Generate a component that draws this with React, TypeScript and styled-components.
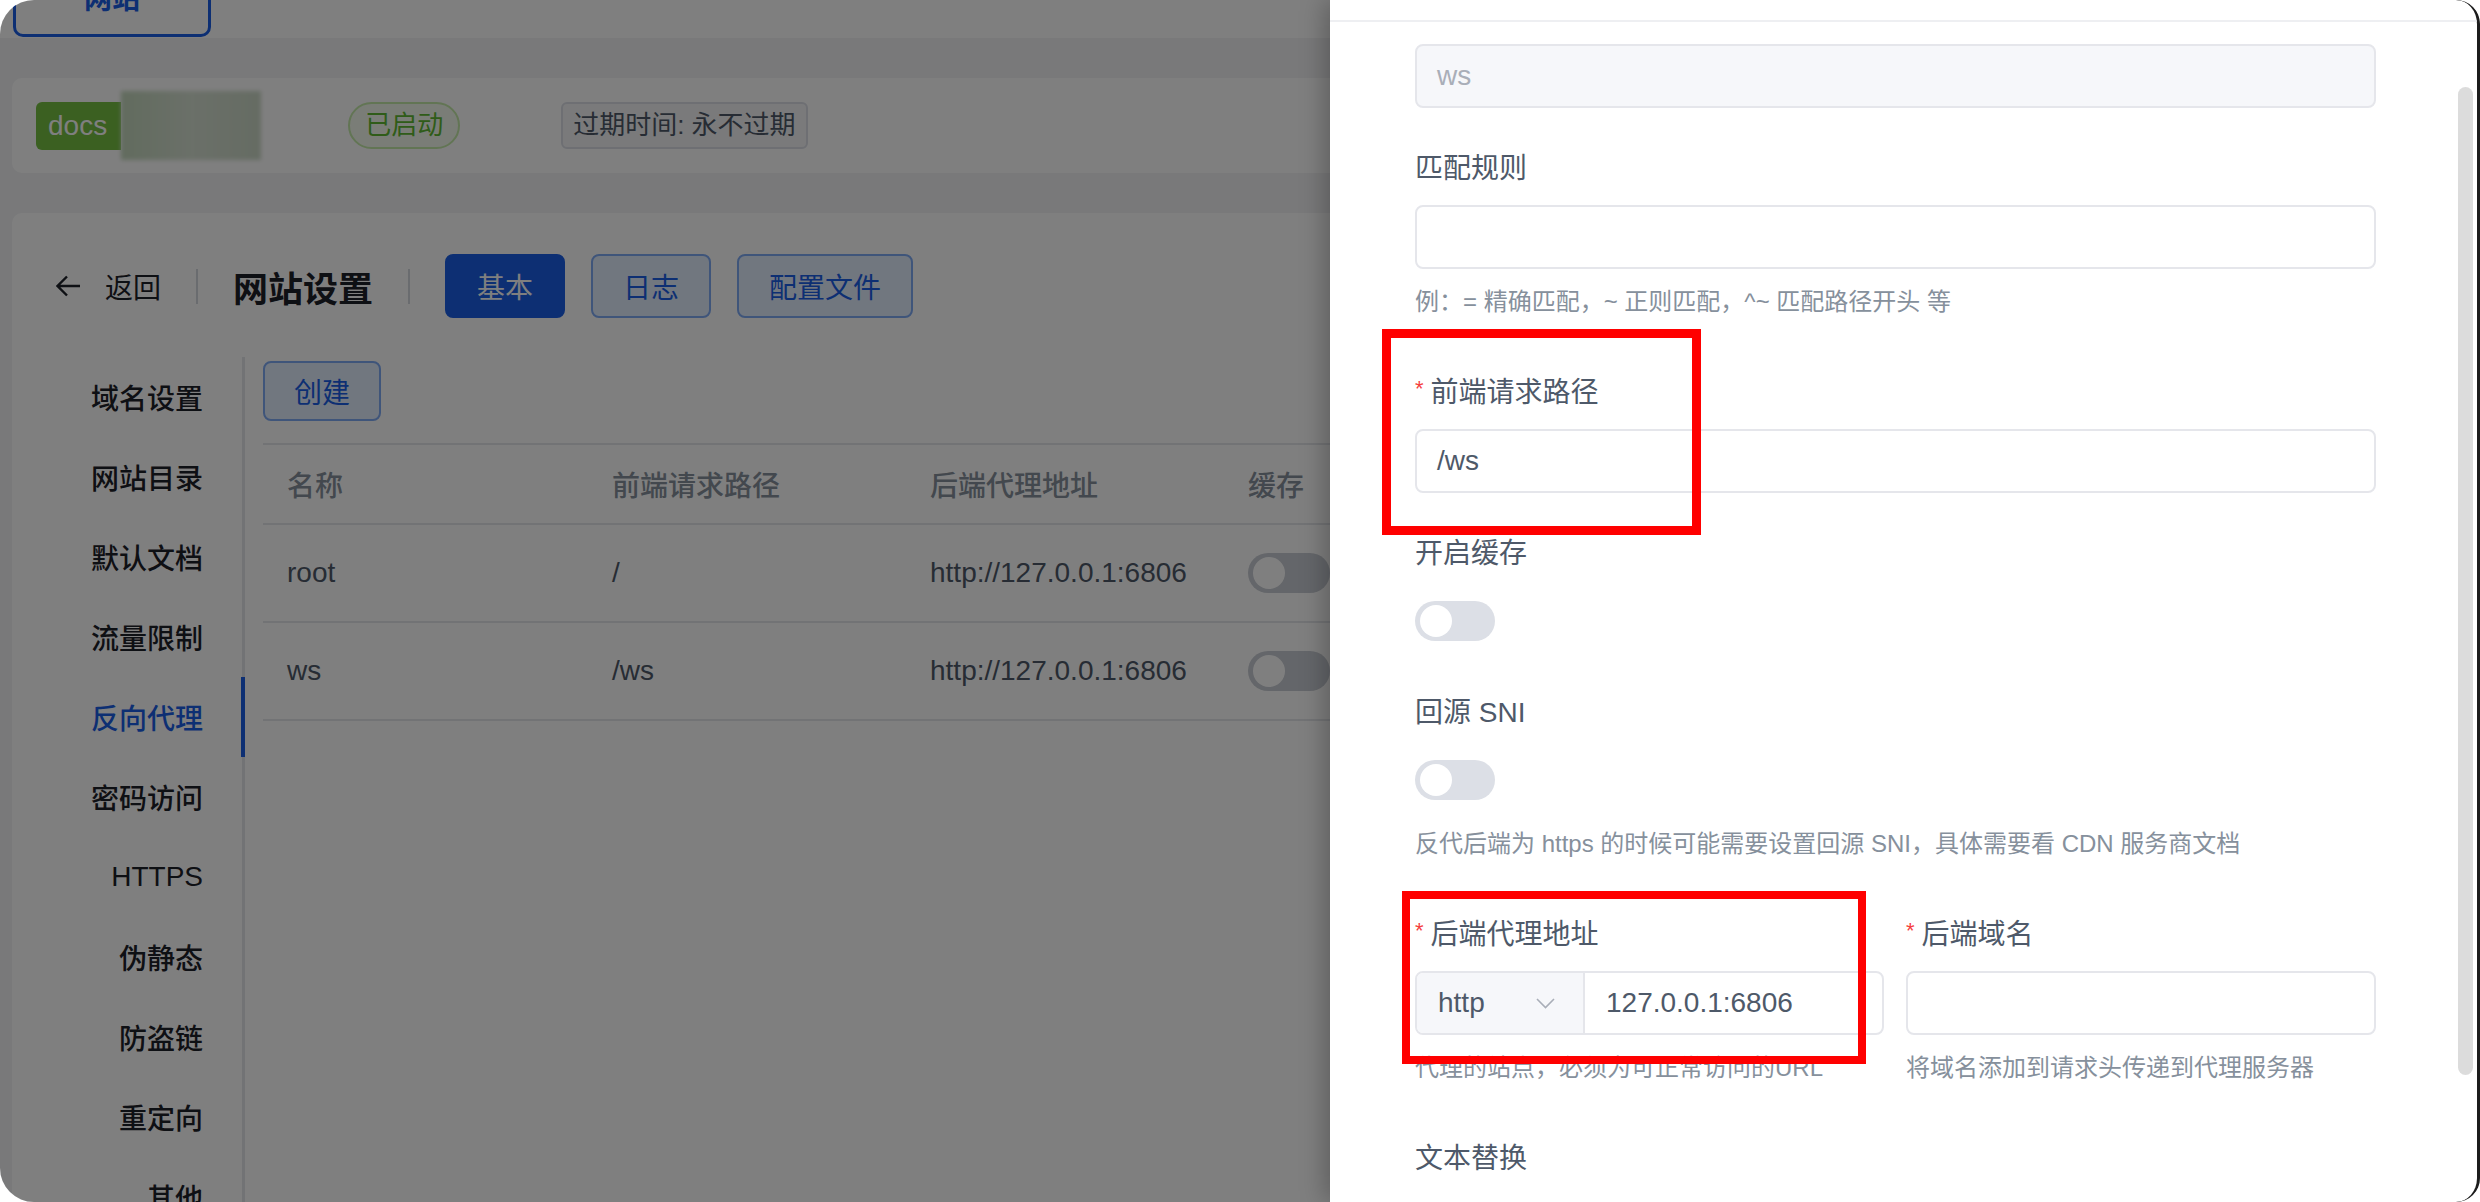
import styled, { createGlobalStyle } from "styled-components";

const BLUE = "#1a5fe6";

const GlobalStyle = createGlobalStyle`
  html, body {
    margin: 0;
    padding: 0;
    background: #ffffff;
  }
  body {
    font-family: "Liberation Sans", "Noto Sans CJK SC", sans-serif;
    color: #1d2129;
  }
  * {
    box-sizing: border-box;
  }
`;

const Window = styled.div`
  position: relative;
  width: 2480px;
  height: 1202px;
  overflow: hidden;
  border-radius: 34px 24px 24px 34px;
  background: #f2f3f5;
`;

const Page = styled.div`
  display: flex;
  flex-direction: column;
  height: 100%;
`;

const TopBar = styled.div`
  height: 38px;
  flex-shrink: 0;
  background: #ffffff;
  position: relative;
`;

const SiteButton = styled.div`
  position: absolute;
  left: 13px;
  bottom: 1px;
  width: 198px;
  height: 80px;
  border: 3px solid ${BLUE};
  border-radius: 10px;
  color: ${BLUE};
  font-size: 28px;
  font-weight: 700;
  display: flex;
  align-items: center;
  justify-content: center;
`;

const InfoCard = styled.div`
  flex-shrink: 0;
  margin: 40px 12px 0 12px;
  height: 95px;
  background: #ffffff;
  border-radius: 10px;
  display: flex;
  align-items: center;
  padding-left: 24px;
`;

const DomainTag = styled.div`
  height: 48px;
  padding: 0 14px 0 12px;
  background: #76c043;
  color: #ffffff;
  font-size: 28px;
  line-height: 48px;
  border-radius: 6px 0 0 6px;
`;

const Blurred = styled.div`
  width: 140px;
  height: 69px;
  background: linear-gradient(90deg, #c4d8bd, #d6e0d2 50%, #cbd8c6);
  filter: blur(2px);
`;

const StatusPill = styled.div`
  margin-left: 87px;
  height: 47px;
  padding: 0 15px;
  border: 2px solid #c5eaa9;
  background: #f4fbee;
  color: #5fb832;
  font-size: 26px;
  line-height: 43px;
  border-radius: 24px;
`;

const ExpireTag = styled.div`
  margin-left: 101px;
  height: 47px;
  padding: 0 10px;
  border: 2px solid #dcdfe6;
  background: #f4f5f7;
  color: #4e5969;
  font-size: 26px;
  line-height: 43px;
  border-radius: 6px;
`;

const MainCard = styled.div`
  flex: 1;
  min-height: 0;
  overflow: hidden;
  margin: 40px 12px 0 12px;
  background: #ffffff;
  border-radius: 10px 10px 0 0;
  display: flex;
  flex-direction: column;
`;

const HeaderRow = styled.div`
  display: flex;
  align-items: center;
  flex-shrink: 0;
  height: 64px;
  margin: 41px 0 0 44px;
`;

const BackLink = styled.div`
  display: flex;
  align-items: center;
  gap: 25px;
  font-size: 28px;
  color: #1d2129;
`;

const VDivider = styled.div`
  width: 2px;
  height: 35px;
  background: #d5d8de;
  margin: 0 35px;
`;

const Title = styled.div`
  font-size: 35px;
  font-weight: 700;
  color: #1d2129;
`;

const Btn = styled.div<{ $primary?: boolean }>`
  height: 64px;
  padding: 0 30px;
  margin-right: 26px;
  display: flex;
  align-items: center;
  font-size: 28px;
  border-radius: 8px;
  border: 2px solid ${(p) => (p.$primary ? BLUE : "#7eaaf5")};
  background: ${(p) => (p.$primary ? BLUE : "#e3eeff")};
  color: ${(p) => (p.$primary ? "#ffffff" : BLUE)};
`;

const Body = styled.div`
  flex: 1;
  display: flex;
  margin-top: 39px;
`;

const Sidebar = styled.div`
  width: 233px;
  border-right: 3px solid #e5e6eb;
  display: flex;
  flex-direction: column;
`;

const MenuItem = styled.div<{ $active?: boolean }>`
  position: relative;
  height: 80px;
  flex-shrink: 0;
  display: flex;
  align-items: center;
  justify-content: flex-end;
  padding-right: 39px;
  font-size: 28px;
  font-weight: 500;
  color: ${(p) => (p.$active ? BLUE : "#1d2129")};

  &::after {
    content: "";
    display: ${(p) => (p.$active ? "block" : "none")};
    position: absolute;
    right: -3px;
    top: 0;
    bottom: 0;
    width: 4px;
    background: ${BLUE};
  }
`;

const Content = styled.div`
  flex: 1;
  padding: 4px 0 0 18px;
`;

const CreateBtn = styled(Btn)`
  height: 60px;
  width: 118px;
  justify-content: center;
  padding: 0;
`;

const Table = styled.table`
  margin-top: 22px;
  width: 100%;
  border-collapse: collapse;
  table-layout: fixed;
  font-size: 28px;

  th,
  td {
    text-align: left;
    padding: 0 0 0 24px;
    border-top: 2px solid #e5e6eb;
    border-bottom: 2px solid #e5e6eb;
  }

  th {
    height: 80px;
    font-weight: 500;
    color: #86909c;
  }

  td {
    height: 98px;
    color: #4e5969;
  }
`;

const Switch = styled.div<{ $track: string; $w: number; $h: number }>`
  width: ${(p) => p.$w}px;
  height: ${(p) => p.$h}px;
  border-radius: ${(p) => p.$h / 2}px;
  background: ${(p) => p.$track};
  position: relative;

  &::before {
    content: "";
    position: absolute;
    left: ${(p) => Math.round(p.$h * 0.12)}px;
    top: ${(p) => Math.round(p.$h * 0.1)}px;
    width: ${(p) => Math.round(p.$h * 0.8)}px;
    height: ${(p) => Math.round(p.$h * 0.8)}px;
    border-radius: 50%;
    background: #ffffff;
  }
`;

const Mask = styled.div`
  position: absolute;
  inset: 0;
  background: rgba(0, 0, 0, 0.5);
`;

const Drawer = styled.div`
  position: absolute;
  top: 0;
  right: 0;
  bottom: 0;
  width: 1150px;
  background: #ffffff;
  border-right: 3px solid #1c1c1c;
  border-radius: 0 24px 24px 0;
  box-shadow: -6px 0 24px rgba(0, 0, 0, 0.25);
  display: flex;
  flex-direction: column;
  overflow: hidden;
`;

const DrawerHeader = styled.div`
  height: 22px;
  flex-shrink: 0;
  border-bottom: 2px solid #eeeff2;
`;

const DrawerBody = styled.div`
  flex: 1;
  padding: 22px 101px 0 85px;
  overflow: hidden;
`;

const ScrollThumb = styled.div`
  position: absolute;
  right: 4px;
  top: 87px;
  width: 15px;
  height: 988px;
  border-radius: 8px;
  background: #dcdcdc;
`;

const FormItem = styled.div`
  display: flex;
  flex-direction: column;
  margin-bottom: 36px;
`;

const Label = styled.div`
  height: 44px;
  margin-bottom: 17px;
  display: flex;
  align-items: center;
  font-size: 28px;
  color: #4e5969;
`;

const Star = styled.span`
  color: #f53f3f;
  font-size: 22px;
  margin-right: 7px;
  align-self: flex-start;
  margin-top: 8px;
`;

const Input = styled.div<{ $disabled?: boolean }>`
  height: 64px;
  border: 2px solid #e5e6eb;
  border-radius: 8px;
  background: ${(p) => (p.$disabled ? "#f6f7fa" : "#ffffff")};
  color: ${(p) => (p.$disabled ? "#a9aeb8" : "#4e5969")};
  font-size: 28px;
  display: flex;
  align-items: center;
  padding-left: 20px;
`;

const SwitchRow = styled.div`
  height: 62px;
  display: flex;
  align-items: center;
`;

const Help = styled.div`
  margin: 15px 0 12px;
  height: 36px;
  line-height: 36px;
  font-size: 24px;
  color: #86909c;
  white-space: nowrap;
`;

const Cols = styled.div`
  display: grid;
  grid-template-columns: 469px 470px;
  column-gap: 22px;
`;

const Group = styled.div`
  height: 64px;
  display: flex;
  border: 2px solid #e5e6eb;
  border-radius: 8px;
  overflow: hidden;
  font-size: 28px;
  color: #4e5969;
`;

const SelectPart = styled.div`
  width: 168px;
  background: #f6f7fa;
  border-right: 2px solid #e5e6eb;
  display: flex;
  align-items: center;
  justify-content: space-between;
  padding: 0 28px 0 21px;
`;

const GroupInput = styled.div`
  flex: 1;
  display: flex;
  align-items: center;
  padding-left: 21px;
`;

const RedBox = styled.div<{ $x: number; $y: number; $w: number; $h: number; $b: number }>`
  position: absolute;
  left: ${(p) => p.$x}px;
  top: ${(p) => p.$y}px;
  width: ${(p) => p.$w}px;
  height: ${(p) => p.$h}px;
  border: ${(p) => p.$b}px solid #ff0000;
`;

const menu = [
  "域名设置",
  "网站目录",
  "默认文档",
  "流量限制",
  "反向代理",
  "密码访问",
  "HTTPS",
  "伪静态",
  "防盗链",
  "重定向",
  "其他",
];

const rows = [
  { name: "root", path: "/", target: "http://127.0.0.1:6806" },
  { name: "ws", path: "/ws", target: "http://127.0.0.1:6806" },
];

export default function App() {
  return (
    <>
      <GlobalStyle />
      <Window>
        <Page>
          <TopBar>
            <SiteButton>网站</SiteButton>
          </TopBar>
          <InfoCard>
            <DomainTag>docs</DomainTag>
            <Blurred />
            <StatusPill>已启动</StatusPill>
            <ExpireTag>过期时间: 永不过期</ExpireTag>
          </InfoCard>
          <MainCard>
            <HeaderRow>
              <BackLink>
                <svg width="24" height="22" viewBox="0 0 24 22" fill="none">
                  <path
                    d="M11 1.5 L1.5 11 L11 20.5 M1.5 11 H24"
                    stroke="#1d2129"
                    strokeWidth="2.4"
                  />
                </svg>
                返回
              </BackLink>
              <VDivider />
              <Title>网站设置</Title>
              <VDivider />
              <Btn $primary>基本</Btn>
              <Btn>日志</Btn>
              <Btn>配置文件</Btn>
            </HeaderRow>
            <Body>
              <Sidebar>
                {menu.map((m) => (
                  <MenuItem key={m} $active={m === "反向代理"}>
                    {m}
                  </MenuItem>
                ))}
              </Sidebar>
              <Content>
                <CreateBtn>创建</CreateBtn>
                <Table>
                  <colgroup>
                    <col style={{ width: 325 }} />
                    <col style={{ width: 318 }} />
                    <col style={{ width: 318 }} />
                    <col />
                  </colgroup>
                  <thead>
                    <tr>
                      <th>名称</th>
                      <th>前端请求路径</th>
                      <th>后端代理地址</th>
                      <th>缓存</th>
                    </tr>
                  </thead>
                  <tbody>
                    {rows.map((r) => (
                      <tr key={r.name}>
                        <td>{r.name}</td>
                        <td>{r.path}</td>
                        <td>{r.target}</td>
                        <td>
                          <Switch $track="#c9cdd4" $w={82} $h={40} />
                        </td>
                      </tr>
                    ))}
                  </tbody>
                </Table>
              </Content>
            </Body>
          </MainCard>
        </Page>

        <Mask />

        <Drawer>
          <DrawerHeader />
          <DrawerBody>
            <FormItem>
              <Input $disabled>ws</Input>
            </FormItem>

            <FormItem>
              <Label>匹配规则</Label>
              <Input />
              <Help>例：= 精确匹配，~ 正则匹配，^~ 匹配路径开头 等</Help>
            </FormItem>

            <FormItem>
              <Label>
                <Star>*</Star>前端请求路径
              </Label>
              <Input>/ws</Input>
            </FormItem>

            <FormItem>
              <Label>开启缓存</Label>
              <SwitchRow>
                <Switch $track="#dcdfe6" $w={80} $h={40} />
              </SwitchRow>
            </FormItem>

            <FormItem>
              <Label>回源 SNI</Label>
              <SwitchRow>
                <Switch $track="#dcdfe6" $w={80} $h={40} />
              </SwitchRow>
              <Help>反代后端为 https 的时候可能需要设置回源 SNI，具体需要看 CDN 服务商文档</Help>
            </FormItem>

            <Cols>
              <FormItem>
                <Label>
                  <Star>*</Star>后端代理地址
                </Label>
                <Group>
                  <SelectPart>
                    http
                    <svg width="19" height="11" viewBox="0 0 19 11" fill="none">
                      <path d="M1 1 L9.5 9.5 L18 1" stroke="#a9aeb8" strokeWidth="1.6" />
                    </svg>
                  </SelectPart>
                  <GroupInput>127.0.0.1:6806</GroupInput>
                </Group>
                <Help>代理的站点，必须为可正常访问的URL</Help>
              </FormItem>
              <FormItem>
                <Label>
                  <Star>*</Star>后端域名
                </Label>
                <Input />
                <Help>将域名添加到请求头传递到代理服务器</Help>
              </FormItem>
            </Cols>

            <FormItem>
              <Label>文本替换</Label>
            </FormItem>
          </DrawerBody>
          <ScrollThumb />
        </Drawer>

        <RedBox $x={1382} $y={329} $w={319} $h={206} $b={9} />
        <RedBox $x={1402} $y={891} $w={464} $h={173} $b={8} />
      </Window>
    </>
  );
}
